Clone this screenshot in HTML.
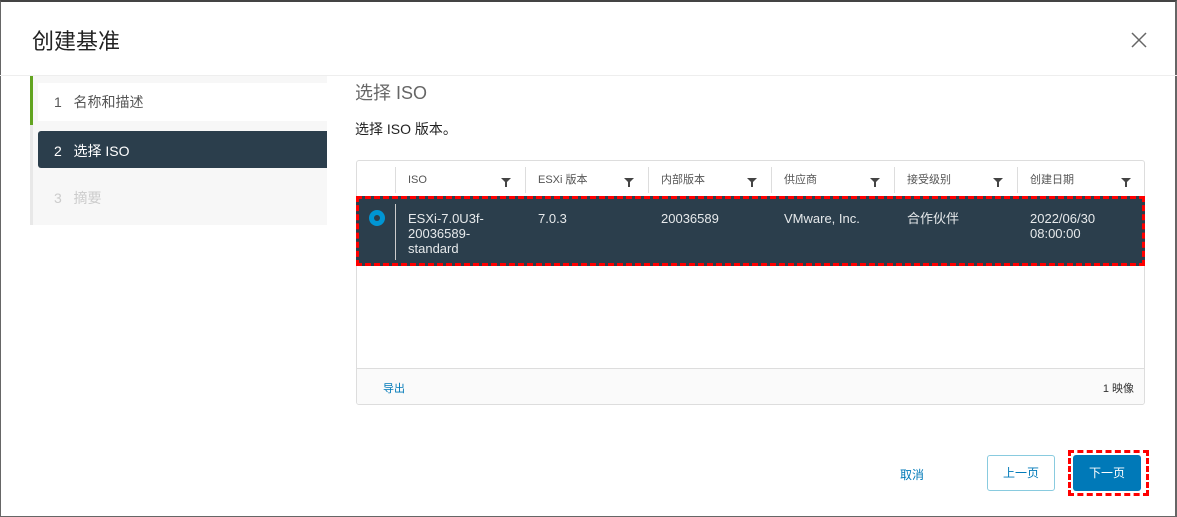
<!DOCTYPE html>
<html><head><meta charset="utf-8"><style>
*{box-sizing:border-box;margin:0;padding:0}
body{width:1177px;height:517px;overflow:hidden;background:#fff;font-family:"Liberation Sans","Noto Sans CJK SC",sans-serif;position:relative;color:#333}
.a{position:absolute}
.frame{left:0;top:0;width:1177px;height:517px;border:1px solid #666;border-top:2px solid #444;border-right:2px solid #666}
.filt{position:absolute;top:17px;width:0;height:0;border-left:5px solid transparent;border-right:5px solid transparent;border-top:5px solid #444}
.filt:after{content:"";position:absolute;left:-1px;top:-1px;width:2px;height:5px;background:#444}
.hd{position:absolute;top:12px;height:14px;font-size:11px;line-height:14px;color:#555;padding-left:12px}
.dv{position:absolute;top:6px;width:1px;height:26px;background:#ddd}
.cell{position:absolute;top:12px;color:#e6e9eb;font-size:13px;line-height:15px}
</style></head><body>
<div class="a frame"></div>
<div class="a" style="left:32px;top:24px;font-size:22px;color:#222">创建基准</div>
<svg class="a" style="left:1131px;top:32px" width="16" height="16"><path d="M1 1L15 15M15 1L1 15" stroke="#666" stroke-width="1.5"/></svg>
<div class="a" style="left:0;top:75px;width:1177px;height:1px;background:#eee"></div>
<div class="a" style="left:30px;top:76px;width:297px;height:149px;background:#f7f7f7"></div>
<div class="a" style="left:30px;top:76px;width:3px;height:149px;background:#e8e8e8"></div>
<div class="a" style="left:30px;top:76px;width:3px;height:49px;background:#62a420"></div>
<div class="a" style="left:38px;top:83px;width:289px;height:38px;background:#fff;font-size:14px;color:#565656;padding:9px 0 0 16px">1&nbsp;&nbsp;&nbsp;名称和描述</div>
<div class="a" style="left:38px;top:131px;width:289px;height:37px;background:#2b3e4c;border-radius:3px 0 0 3px;font-size:14px;color:#fff;padding:10px 0 0 16px">2&nbsp;&nbsp;&nbsp;选择 ISO</div>
<div class="a" style="left:54px;top:188px;font-size:14px;color:#ccc">3&nbsp;&nbsp;&nbsp;摘要</div>
<div class="a" style="left:355px;top:79px;font-size:18px;color:#666">选择 ISO</div>
<div class="a" style="left:355px;top:119px;font-size:14px;color:#222">选择 ISO 版本。</div>
<div class="a" style="left:356px;top:160px;width:789px;height:245px;border:1px solid #ddd;border-radius:3px;overflow:hidden">
 <div class="dv" style="left:38px"></div>
 <div class="hd" style="left:39px">ISO</div><div class="filt" style="left:144px"></div><div class="dv" style="left:168px"></div>
 <div class="hd" style="left:169px">ESXi 版本</div><div class="filt" style="left:267px"></div><div class="dv" style="left:291px"></div>
 <div class="hd" style="left:292px">内部版本</div><div class="filt" style="left:390px"></div><div class="dv" style="left:414px"></div>
 <div class="hd" style="left:415px">供应商</div><div class="filt" style="left:513px"></div><div class="dv" style="left:537px"></div>
 <div class="hd" style="left:538px">接受级别</div><div class="filt" style="left:636px"></div><div class="dv" style="left:660px"></div>
 <div class="hd" style="left:661px">创建日期</div><div class="filt" style="left:764px"></div>
 <div style="position:absolute;left:0;top:207px;width:789px;height:37px;background:#fafafa;border-top:1px solid #ddd;font-size:11px">
  <span style="position:absolute;left:26px;top:11px;color:#0079b8">导出</span>
  <span style="position:absolute;right:12px;top:11px;color:#333">1 映像</span>
 </div>
</div>
<div class="a" style="left:356px;top:196px;width:789px;height:70px;background:#2b3e4c;border:3px dashed #f00">
 <div style="position:absolute;left:10px;top:11px;width:16px;height:16px;border-radius:50%;background:#0095d3"><div style="position:absolute;left:5px;top:5px;width:6px;height:6px;border-radius:50%;background:#2b3e4c"></div></div>
 <div style="position:absolute;left:36px;top:5px;width:1px;height:56px;background:#ccc"></div>
 <div class="cell" style="left:49px">ESXi-7.0U3f-<br>20036589-<br>standard</div>
 <div class="cell" style="left:179px">7.0.3</div>
 <div class="cell" style="left:302px">20036589</div>
 <div class="cell" style="left:425px">VMware, Inc.</div>
 <div class="cell" style="left:548px">合作伙伴</div>
 <div class="cell" style="left:671px">2022/06/30<br>08:00:00</div>
</div>
<div class="a" style="left:900px;top:466px;font-size:12px;color:#0079b8">取消</div>
<div class="a" style="left:987px;top:455px;width:68px;height:36px;border:1px solid #89cbdf;border-radius:3px;font-size:12px;color:#0079b8;text-align:center;line-height:34px">上一页</div>
<div class="a" style="left:1068px;top:450px;width:81px;height:46px;border:3px dashed #f00"></div>
<div class="a" style="left:1073px;top:455px;width:68px;height:36px;background:#0079b8;border-radius:3px;font-size:12px;color:#fff;text-align:center;line-height:36px">下一页</div>
</body></html>
